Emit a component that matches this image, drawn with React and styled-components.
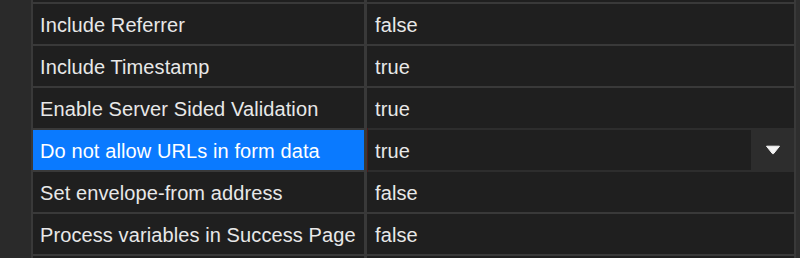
import React from 'react';
import styled, { createGlobalStyle } from 'styled-components';

const GlobalStyle = createGlobalStyle`
  html, body {
    margin: 0;
    padding: 0;
    background: #2a2a2a;
    overflow: hidden;
  }
  body {
    font-family: "Liberation Sans", Arial, sans-serif;
  }
`;

// first and last rows sit mostly outside the scrolled viewport
const ROWS = [
  { name: '', value: '' },
  { name: 'Include Referrer', value: 'false' },
  { name: 'Include Timestamp', value: 'true' },
  { name: 'Enable Server Sided Validation', value: 'true' },
  { name: 'Do not allow URLs in form data', value: 'true', selected: true },
  { name: 'Set envelope-from address', value: 'false' },
  { name: 'Process variables in Success Page', value: 'false' },
  { name: '', value: '' }
];

const Shell = styled.div`
  display: flex;
  height: 258px;
  width: 800px;
  overflow: hidden;
`;

const Gutter = styled.div`
  width: 31px;
  flex: none;
  background: #2a2a2a;
`;

const Viewport = styled.div`
  flex: 1;
  overflow: hidden;
  background: #393939;
  border-right: 4px solid #2e2e2e;
`;

const Grid = styled.div`
  display: grid;
  grid-template-columns: 331px 1fr;
  grid-auto-rows: 40px;
  column-gap: 3px;
  row-gap: 2px;
  padding: 0 2px;
  margin-top: -38px;
`;

const Cell = styled.div`
  display: flex;
  align-items: center;
  padding: 3px 0 0 ${({ $value }) => ($value ? '8px' : '7px')};
  background: ${({ $selected }) => ($selected ? '#0a7aff' : '#1f1f1f')};
  color: ${({ $selected }) => ($selected ? '#ffffff' : '#e8e8e8')};
  font-size: 20px;
  letter-spacing: 0.1px;
  white-space: nowrap;
  overflow: hidden;
`;

const Editor = styled.div`
  display: flex;
  margin: -2px 0 -2px 0;
  background: #2d2d2d;
  border-left: 1px solid #4a1a1a;
`;

const Input = styled.div`
  flex: 1;
  display: flex;
  align-items: center;
  padding: 3px 0 0 7px;
  margin: 2px 0 2px 0;
  background: #1f1f1f;
  color: #e8e8e8;
  font-size: 20px;
  letter-spacing: 0.1px;
`;

const DropButton = styled.div`
  width: 43px;
  display: flex;
  align-items: center;
  justify-content: center;
`;

const Caret = () => (
  <svg width="16" height="10" viewBox="0 0 16 10">
    <path d="M1.5 1.2 L14.5 1.2 L8.6 8.6 Q8 9.3 7.4 8.6 Z" fill="#f4f4f4" stroke="#f4f4f4" strokeWidth="1" strokeLinejoin="round" />
  </svg>
);

export default function App() {
  return (
    <>
      <GlobalStyle />
      <Shell>
        <Gutter />
        <Viewport>
          <Grid>
            {ROWS.map((row, i) => (
              <React.Fragment key={i}>
                <Cell $selected={row.selected}>{row.name}</Cell>
                {row.selected ? (
                  <Editor>
                    <Input>{row.value}</Input>
                    <DropButton>
                      <Caret />
                    </DropButton>
                  </Editor>
                ) : (
                  <Cell $value>{row.value}</Cell>
                )}
              </React.Fragment>
            ))}
          </Grid>
        </Viewport>
      </Shell>
    </>
  );
}
